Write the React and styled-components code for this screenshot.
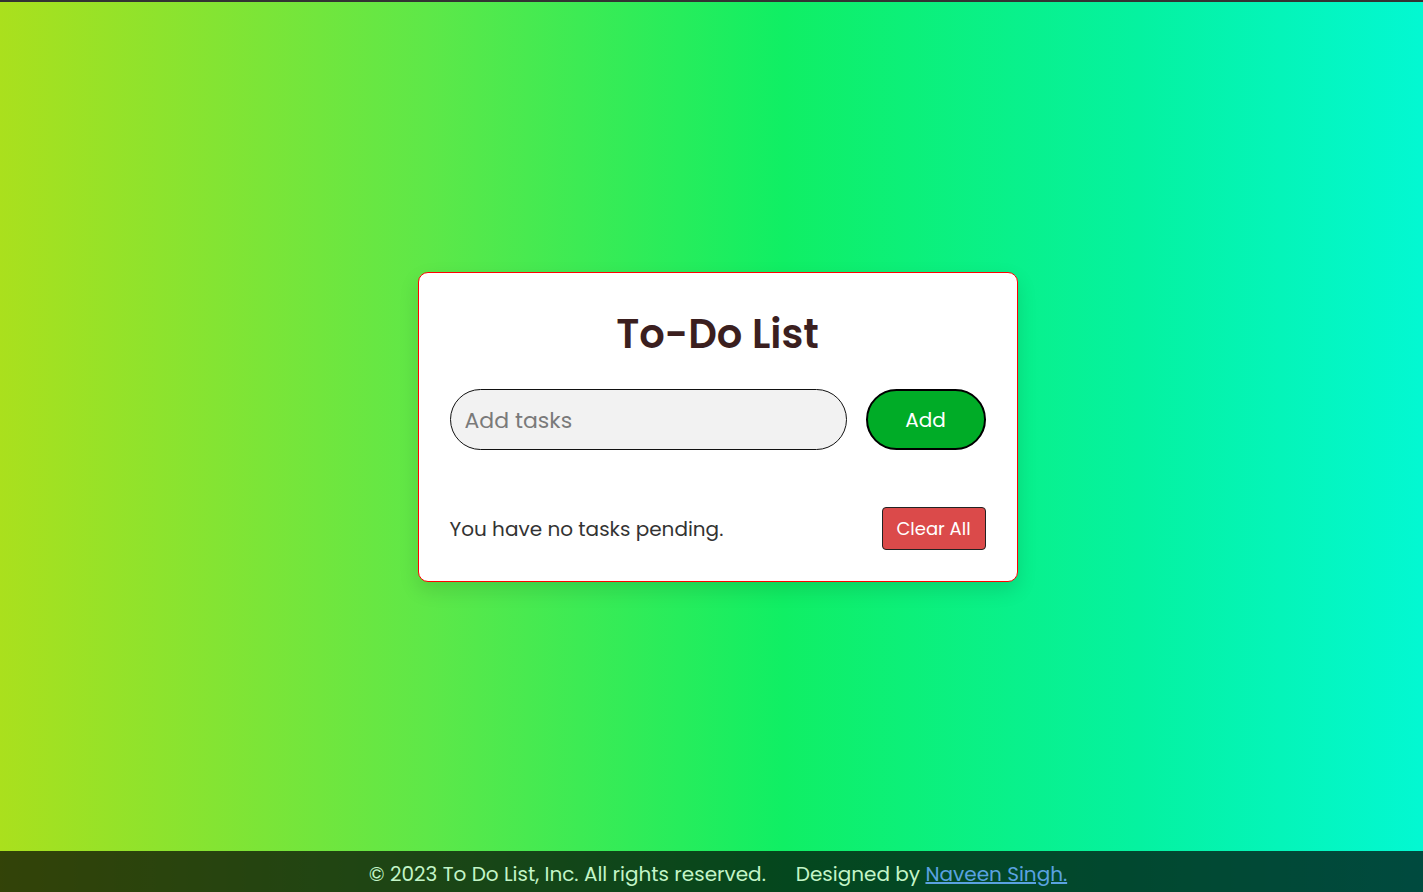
import React, { useState } from 'react'
import styled, { createGlobalStyle } from 'styled-components'

const GlobalStyle = createGlobalStyle`
  * { box-sizing: border-box; }
  html, body { margin: 0; padding: 0; height: 100%; }
  body {
    font-family: "Poppins", "Open Sans", "Noto Sans", sans-serif;
    border-top: 2px solid #333;
    background: linear-gradient(to right, #aae01d 0%, #5ee848 30%, #10ef64 55%, #05f2a0 80%, #03f8d2 100%);
    background-attachment: fixed;
  }
  #root { min-height: calc(100vh - 2px); }
`

const Page = styled.div`
  min-height: calc(100vh - 2px);
  display: flex;
  flex-direction: column;
`

const Main = styled.main`
  flex: 1;
  display: flex;
  align-items: center;
  justify-content: center;
  padding: 0 0 0 12px;
`

const Card = styled.div`
  width: 600px;
  background: #fff;
  border: 1px solid red;
  border-radius: 10px;
  box-shadow: 0 8px 20px rgba(0, 0, 0, 0.12);
  padding: 31px;
`

const Title = styled.h1`
  margin: 6px 0 31px;
  text-align: center;
  font-size: 40px;
  font-weight: 600;
  color: #3b1f1f;
  line-height: 48px;
`

const InputRow = styled.div`
  display: flex;
  align-items: center;
  gap: 19px;
`

const TaskInput = styled.input`
  flex: 1;
  min-width: 0;
  height: 61px;
  border: 1px solid #111;
  border-radius: 31px;
  background: #f2f2f2;
  padding: 3px 14px 0;
  font-family: inherit;
  font-size: 22px;
  color: #333;
  outline: none;
  &::placeholder { color: #7a7a7a; }
`

const AddButton = styled.button`
  flex-shrink: 0;
  width: 120px;
  height: 61px;
  padding-top: 3px;
  border: 2px solid #000;
  border-radius: 31px;
  background: #00ac27;
  color: #fff;
  font-family: inherit;
  font-size: 20px;
  cursor: pointer;
`

const StatusRow = styled.div`
  display: flex;
  align-items: center;
  justify-content: space-between;
  margin-top: 57px;
`

const Pending = styled.span`
  font-size: 20px;
  color: #333;
  padding-top: 1px;
`

const ClearButton = styled.button`
  flex-shrink: 0;
  width: 104px;
  height: 43px;
  border: 1px solid #222;
  border-radius: 4px;
  background: #db4a4a;
  color: #fff;
  font-family: inherit;
  font-size: 18px;
  cursor: pointer;
`

const Footer = styled.footer`
  height: 41px;
  padding: 4px 0 0 13px;
  background: rgba(0, 0, 0, 0.7);
  display: flex;
  align-items: center;
  justify-content: center;
  gap: 30px;
  color: #c3f5c8;
  font-size: 20px;
`

const Link = styled.a`
  color: #5aa2e0;
  text-decoration: underline;
`

const App = () => {
  const [task, setTask] = useState('')
  return (
    <Page>
      <GlobalStyle />
      <Main>
        <Card>
          <Title>To-Do List</Title>
          <InputRow>
            <TaskInput
              placeholder="Add tasks"
              value={task}
              onChange={(e) => setTask(e.target.value)}
            />
            <AddButton>Add</AddButton>
          </InputRow>
          <StatusRow>
            <Pending>You have no tasks pending.</Pending>
            <ClearButton>Clear All</ClearButton>
          </StatusRow>
        </Card>
      </Main>
      <Footer>
        <span>© 2023 To Do List, Inc. All rights reserved.</span>
        <span>
          Designed by <Link href="#">Naveen Singh.</Link>
        </span>
      </Footer>
    </Page>
  )
}

export default App
